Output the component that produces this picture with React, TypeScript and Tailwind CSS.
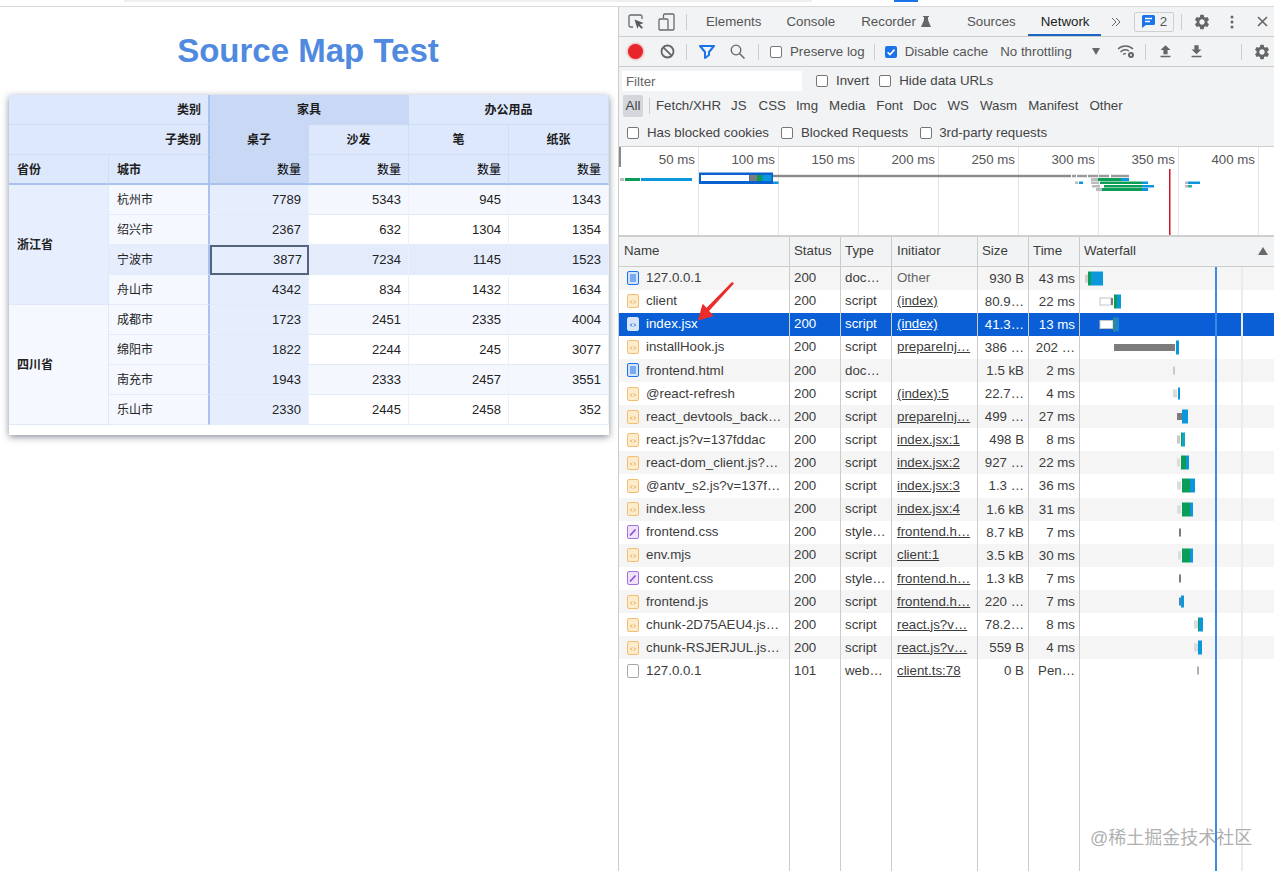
import { MdSettings, MdFileUpload, MdFileDownload } from 'react-icons/md';

type Seg = [number, number, string, number];

const GREEN = '#0a9d58';
const BLUE = '#0b97dc';
const LIGHT = '#dcdcdc';
const DARK = '#7c7c7c';

const requests: {
  name: string;
  kind: string;
  status: string;
  type: string;
  initiator: string;
  link: boolean;
  size: string;
  time: string;
  bars: Seg[];
}[] = [
  { name: '127.0.0.1', kind: 'doc', status: '200', type: 'doc…', initiator: 'Other', link: false, size: '930 B', time: '43 ms', bars: [[5, 3, '#d0d0d0', 8], [8, 3, GREEN, 14], [11, 12, BLUE, 14]] },
  { name: 'client', kind: 'js', status: '200', type: 'script', initiator: '(index)', link: true, size: '80.9…', time: '22 ms', bars: [[20, 11, '#ffffff', 7], [31, 2, DARK, 7], [34, 3, GREEN, 14], [37, 4, BLUE, 14]] },
  { name: 'index.jsx', kind: 'sel', status: '200', type: 'script', initiator: '(index)', link: true, size: '41.3…', time: '13 ms', bars: [[20, 13, '#ffffff', 8], [33, 3, '#2a8a9a', 14], [36, 3, '#1c83d0', 14]] },
  { name: 'installHook.js', kind: 'js', status: '200', type: 'script', initiator: 'prepareInj…', link: true, size: '386 …', time: '202 …', bars: [[34, 61, DARK, 7], [96, 3, BLUE, 14]] },
  { name: 'frontend.html', kind: 'doc', status: '200', type: 'doc…', initiator: '', link: false, size: '1.5 kB', time: '2 ms', bars: [[93, 2, '#c8c8c8', 8]] },
  { name: '@react-refresh', kind: 'js', status: '200', type: 'script', initiator: '(index):5', link: true, size: '22.7…', time: '4 ms', bars: [[93, 4, LIGHT, 8], [98, 2, BLUE, 12]] },
  { name: 'react_devtools_back…', kind: 'js', status: '200', type: 'script', initiator: 'prepareInj…', link: true, size: '499 …', time: '27 ms', bars: [[97, 5, DARK, 7], [102, 6, BLUE, 14]] },
  { name: 'react.js?v=137fddac', kind: 'js', status: '200', type: 'script', initiator: 'index.jsx:1', link: true, size: '498 B', time: '8 ms', bars: [[97, 3, '#c8c8c8', 8], [101, 1, GREEN, 14], [102, 3, '#10a5c5', 14]] },
  { name: 'react-dom_client.js?…', kind: 'js', status: '200', type: 'script', initiator: 'index.jsx:2', link: true, size: '927 …', time: '22 ms', bars: [[97, 3, LIGHT, 8], [101, 5, GREEN, 14], [106, 3, BLUE, 14]] },
  { name: '@antv_s2.js?v=137f…', kind: 'js', status: '200', type: 'script', initiator: 'index.jsx:3', link: true, size: '1.3 …', time: '36 ms', bars: [[97, 4, LIGHT, 8], [102, 8, GREEN, 14], [110, 5, BLUE, 14]] },
  { name: 'index.less', kind: 'js', status: '200', type: 'script', initiator: 'index.jsx:4', link: true, size: '1.6 kB', time: '31 ms', bars: [[97, 4, LIGHT, 8], [102, 8, GREEN, 14], [110, 3, BLUE, 14]] },
  { name: 'frontend.css', kind: 'css', status: '200', type: 'style…', initiator: 'frontend.h…', link: true, size: '8.7 kB', time: '7 ms', bars: [[99, 2, DARK, 8]] },
  { name: 'env.mjs', kind: 'js', status: '200', type: 'script', initiator: 'client:1', link: true, size: '3.5 kB', time: '30 ms', bars: [[98, 3, LIGHT, 8], [102, 8, GREEN, 14], [110, 3, BLUE, 14]] },
  { name: 'content.css', kind: 'css', status: '200', type: 'style…', initiator: 'frontend.h…', link: true, size: '1.3 kB', time: '7 ms', bars: [[99, 2, DARK, 8]] },
  { name: 'frontend.js', kind: 'js', status: '200', type: 'script', initiator: 'frontend.h…', link: true, size: '220 …', time: '7 ms', bars: [[99, 2, '#4a87b0', 8], [101, 3, BLUE, 12]] },
  { name: 'chunk-2D75AEU4.js…', kind: 'js', status: '200', type: 'script', initiator: 'react.js?v…', link: true, size: '78.2…', time: '8 ms', bars: [[114, 4, LIGHT, 8], [118, 1, GREEN, 14], [119, 4, BLUE, 14]] },
  { name: 'chunk-RSJERJUL.js…', kind: 'js', status: '200', type: 'script', initiator: 'react.js?v…', link: true, size: '559 B', time: '4 ms', bars: [[114, 4, LIGHT, 8], [118, 4, BLUE, 14]] },
  { name: '127.0.0.1', kind: 'ws', status: '101', type: 'web…', initiator: 'client.ts:78', link: true, size: '0 B', time: 'Pen…', bars: [[117, 2, '#b0b0b0', 8]] },
];

const tableRows = [
  { city: '杭州市', nums: ['7789', '5343', '945', '1343'], bg: 'bg-[#f4f7fe]', cityBg: 'bg-[#f5f8ff]' },
  { city: '绍兴市', nums: ['2367', '632', '1304', '1354'], bg: 'bg-white', cityBg: 'bg-[#f5f8ff]' },
  { city: '宁波市', nums: ['3877', '7234', '1145', '1523'], bg: 'bg-[#e4ecfc]', cityBg: 'bg-[#e6edfd]' },
  { city: '舟山市', nums: ['4342', '834', '1432', '1634'], bg: 'bg-white', cityBg: 'bg-[#f5f8ff]' },
  { city: '成都市', nums: ['1723', '2451', '2335', '4004'], bg: 'bg-[#f4f7fe]', cityBg: 'bg-[#f5f8ff]' },
  { city: '绵阳市', nums: ['1822', '2244', '245', '3077'], bg: 'bg-white', cityBg: 'bg-[#f5f8ff]' },
  { city: '南充市', nums: ['1943', '2333', '2457', '3551'], bg: 'bg-[#f4f7fe]', cityBg: 'bg-[#f5f8ff]' },
  { city: '乐山市', nums: ['2330', '2445', '2458', '352'], bg: 'bg-white', cityBg: 'bg-[#f5f8ff]' },
];

const HEAD = 'bg-[#dde8fc] border-r border-b border-[#d0ddf6] flex items-center pt-[1px] font-bold text-[12px] text-[#1d1d1d]';
const HOT = 'bg-[#c9d8f5] border-r border-b border-[#c9d8f5] flex items-center pt-[1px] font-bold text-[12px] text-[#1d1d1d]';

function PivotTable() {
  return (
    <div className="mt-[26px] ml-[9px] w-[600px] h-[340px] bg-white rounded-t-[2px] shadow-[0_2px_7px_rgba(40,50,70,0.55)] self-start">
      <div className="grid grid-cols-[100px_101px_99px_100px_100px_100px] grid-rows-[repeat(11,30px)] text-[#222]">
        <div className={`${HEAD} col-span-2 justify-end pr-[7px] border-r-2 border-r-[#a9c3ee]`}>类别</div>
        <div className={`${HOT} col-span-2 justify-center`}>家具</div>
        <div className={`${HEAD} col-span-2 justify-center`}>办公用品</div>

        <div className={`${HEAD} col-span-2 justify-end pr-[7px] border-r-2 border-r-[#a9c3ee]`}>子类别</div>
        <div className={`${HOT} justify-center`}>桌子</div>
        <div className={`${HEAD} justify-center`}>沙发</div>
        <div className={`${HEAD} justify-center`}>笔</div>
        <div className={`${HEAD} justify-center`}>纸张</div>

        <div className={`${HEAD} pl-2 border-b-2 border-b-[#a9c3ee]`}>省份</div>
        <div className={`${HEAD} pl-2 border-b-2 border-b-[#a9c3ee] border-r-2 border-r-[#a9c3ee]`}>城市</div>
        <div className={`${HOT} justify-end pr-[7px] !font-normal text-black border-b-2 border-b-[#a9c3ee]`}>数量</div>
        <div className={`${HEAD} justify-end pr-[7px] !font-normal text-black border-b-2 border-b-[#a9c3ee]`}>数量</div>
        <div className={`${HEAD} justify-end pr-[7px] !font-normal text-black border-b-2 border-b-[#a9c3ee]`}>数量</div>
        <div className={`${HEAD} justify-end pr-[7px] !font-normal text-black border-b-2 border-b-[#a9c3ee]`}>数量</div>

        {tableRows.map((r, i) => (
          <TableRow key={r.city} row={r} index={i} />
        ))}
      </div>
    </div>
  );
}

function TableRow({ row, index }: { row: (typeof tableRows)[number]; index: number }) {
  const line = 'border-b border-[#e3eafa]';
  return (
    <>
      {index % 4 === 0 && (
        <div
          className={`row-span-4 flex items-center pl-2 font-bold text-[12px] border-r border-b border-[#dfe7f9] ${
            index === 0 ? 'bg-[#e7eefe]' : 'bg-[#f5f8ff]'
          }`}
        >
          {index === 0 ? '浙江省' : '四川省'}
        </div>
      )}
      <div className={`${row.cityBg} ${line} border-r-2 border-r-[#a9c3ee] flex items-center pl-2 text-[12px]`}>{row.city}</div>
      {row.nums.map((n, j) => {
        const selected = index === 2 && j === 0;
        const bg = j === 0 ? 'bg-[#e6eefe]' : row.bg;
        return (
          <div
            key={j}
            className={`${bg} flex items-center justify-end text-[13px] ${
              selected ? 'border-2 border-[#55637c] pr-[5px]' : `${line} border-r border-r-[#edf1fb] pr-[7px]`
            }`}
          >
            {n}
          </div>
        );
      })}
    </>
  );
}

function Box({ checked = false }: { checked?: boolean }) {
  return checked ? (
    <svg width="12" height="12" viewBox="0 0 12 12" className="block shrink-0">
      <rect width="12" height="12" rx="2" fill="#1a73e8" />
      <path d="M2.6 6.2 5 8.6 9.5 3.6" fill="none" stroke="#fff" strokeWidth="1.6" />
    </svg>
  ) : (
    <span className="block w-3 h-3 shrink-0 rounded-[2px] border border-[#767676] bg-white" />
  );
}

function Sep({ className }: { className: string }) {
  return <span className={`block w-px h-4 bg-[#cdcdcd] shrink-0 ${className}`} />;
}

function FileIcon({ kind }: { kind: string }) {
  if (kind === 'doc') {
    return (
      <svg width="12" height="14" viewBox="0 0 12 14" className="shrink-0">
        <rect x="0.5" y="0.5" width="11" height="13" rx="1.5" fill="#d6e5fb" stroke="#1a73e8" />
        <path d="M3 4h6M3 6h6M3 8h6M3 10h6" stroke="#1a73e8" />
      </svg>
    );
  }
  if (kind === 'css') {
    return (
      <svg width="12" height="14" viewBox="0 0 12 14" className="shrink-0">
        <rect x="0.5" y="0.5" width="11" height="13" rx="1.5" fill="#efe3fb" stroke="#a56fdf" />
        <path d="M3 10.5 8.5 4.5" stroke="#8e44d8" strokeWidth="1.6" />
      </svg>
    );
  }
  if (kind === 'ws') {
    return (
      <svg width="12" height="14" viewBox="0 0 12 14" className="shrink-0">
        <rect x="0.5" y="0.5" width="11" height="13" rx="1.5" fill="#fff" stroke="#a8a8a8" />
      </svg>
    );
  }
  const sel = kind === 'sel';
  const stroke = sel ? '#0a5fd6' : '#e8a33d';
  return (
    <svg width="12" height="14" viewBox="0 0 12 14" className="shrink-0">
      <rect x="0.5" y="0.5" width="11" height="13" rx="1.5" fill={sel ? '#d6e5fb' : '#fdeccb'} stroke={sel ? '#d6e5fb' : '#f3bd72'} />
      <path d="M5 6.5 3.5 8 5 9.5M7 6.5 8.5 8 7 9.5" fill="none" stroke={stroke} />
    </svg>
  );
}

function WaterfallBars({ bars }: { bars: Seg[] }) {
  return (
    <svg width="194" height="23" className="block">
      {bars.map((b, i) => (
        <rect
          key={i}
          x={b[0]}
          y={(23 - b[3]) / 2}
          width={b[1]}
          height={b[3]}
          fill={b[2]}
          stroke={b[2] === '#ffffff' ? '#c4c4c4' : 'none'}
        />
      ))}
    </svg>
  );
}

function NetworkTable() {
  const cols = ['w-[171px] pl-[5px]', 'w-[51px] pl-[4px]', 'w-[51px] pl-[4px]', 'w-[86px] pl-[5px]', 'w-[51px] pr-[4px] text-right', 'w-[51px] pr-[4px] text-right'];
  return (
    <div className="flex-1 flex flex-col relative min-h-0 text-[13.3px] text-[#3c3c3c]">
      <div className="flex h-[29.5px] shrink-0 items-center bg-[#f1f3f4] border-b border-[#cccccc]">
        {['Name', 'Status', 'Type', 'Initiator'].map((h, i) => (
          <div key={h} className={`${cols[i]} h-full flex items-center border-r border-[#cccccc]`}>{h}</div>
        ))}
        <div className="w-[51px] pl-[4px] h-full flex items-center border-r border-[#cccccc]">Size</div>
        <div className="w-[51px] pl-[4px] h-full flex items-center border-r border-[#cccccc]">Time</div>
        <div className="flex-1 pl-[4px] pr-[6px] h-full flex items-center justify-between">
          Waterfall
          <svg width="10" height="8" viewBox="0 0 10 8">
            <path d="M5 0 10 8H0z" fill="#6a6a6a" />
          </svg>
        </div>
      </div>
      {requests.map((r, i) => {
        const selected = r.kind === 'sel';
        const rowBg = selected ? 'bg-[#0a5fd6] text-white' : i % 2 === 0 ? 'bg-[#f5f5f5]' : 'bg-white';
        return (
          <div key={i} className={`flex h-[23.12px] shrink-0 items-center whitespace-nowrap ${rowBg}`}>
            <div className={`${cols[0]} h-full flex items-center gap-[7px] pl-[8px] border-r border-[#cccccc]`}>
              <FileIcon kind={r.kind} />
              <span>{r.name}</span>
            </div>
            <div className={`${cols[1]} h-full flex items-center border-r border-[#cccccc]`}>{r.status}</div>
            <div className={`${cols[2]} h-full flex items-center border-r border-[#cccccc]`}>{r.type}</div>
            <div className={`${cols[3]} h-full flex items-center border-r border-[#cccccc] overflow-hidden`}>
              <span className={r.link ? 'underline' : selected ? '' : 'text-[#666]'}>{r.initiator}</span>
            </div>
            <div className={`${cols[4]} h-full leading-[23px] border-r border-[#cccccc]`}>{r.size}</div>
            <div className={`${cols[5]} h-full leading-[23px] border-r border-[#cccccc]`}>{r.time}</div>
            <div className="flex-1 h-full">
              <WaterfallBars bars={r.bars} />
            </div>
          </div>
        );
      })}
      <div className="flex flex-1">
        {cols.map((c, i) => (
          <div key={i} className={`${c} border-r border-[#cccccc]`} />
        ))}
      </div>
      {/* DOMContentLoaded / load markers over the rows */}
      <span className="absolute top-[30px] bottom-0 left-[596px] w-[2px] bg-[#3b8ae6]" />
      <span className="absolute top-[30px] bottom-0 left-[622px] w-[2px] bg-[#ececec]" />
    </div>
  );
}

function Overview() {
  const ticks = ['50 ms', '100 ms', '150 ms', '200 ms', '250 ms', '300 ms', '350 ms', '400 ms'];
  return (
    <div className="relative h-[90px] shrink-0 flex bg-white border-b-2 border-[#cfcfcf]">
      {ticks.map((t) => (
        <div key={t} className="w-[80px] shrink-0 border-r border-[#e4e4e4] text-right pr-[3px] pt-[3px] text-[13.3px] text-[#555]">
          {t}
        </div>
      ))}
      <svg width="655" height="88" viewBox="618 147 655 88" className="absolute left-0 top-0">
        <rect x="618" y="147" width="2" height="20" fill="#8a8a8a" />
        <rect x="619" y="178" width="4" height="3" fill="#bbb" />
        <rect x="624" y="178" width="15" height="3" fill={GREEN} />
        <rect x="640" y="178" width="51" height="3" fill={BLUE} />
        <rect x="698" y="172.500" width="74" height="11.500" fill="#0a62d0" />
        <rect x="772" y="181.500" width="5.500" height="2.500" fill="#0b97dc" />
        <rect x="700" y="175" width="48" height="6" fill="#fff" />
        <rect x="748.500" y="175" width="7.500" height="6" fill={DARK} />
        <rect x="756" y="175" width="5.500" height="6" fill={GREEN} />
        <rect x="761.500" y="175" width="9" height="6" fill={BLUE} />
        <rect x="772" y="174.800" width="298" height="2.400" fill="#8a8a8a" />
        <path d="M1071 176h4M1076 176h10M1087 176h10M1098 176h10M1110 176h18" stroke="#9a9a9a" strokeWidth="2.400" />
        <rect x="1090" y="178" width="7" height="3" fill="#bbb" />
        <rect x="1097" y="178" width="23" height="3" fill={GREEN} />
        <rect x="1120" y="178" width="8" height="3" fill={BLUE} />
        <rect x="1074" y="181.500" width="3" height="2.500" fill="#bbb" />
        <rect x="1078" y="181.500" width="4" height="2.500" fill={BLUE} />
        <rect x="1090" y="181.500" width="8" height="2.500" fill="#bbb" />
        <rect x="1099" y="181.500" width="42" height="2.500" fill={GREEN} />
        <rect x="1141" y="181.500" width="6" height="2.500" fill={BLUE} />
        <rect x="1091" y="185" width="8" height="2.500" fill="#bbb" />
        <rect x="1103" y="185" width="38" height="2.500" fill={GREEN} />
        <rect x="1141" y="185" width="12" height="2.500" fill={BLUE} />
        <rect x="1095" y="188" width="6" height="3" fill="#bbb" />
        <rect x="1101" y="188" width="40" height="3" fill={GREEN} />
        <rect x="1141" y="188" width="6" height="3" fill={BLUE} />
        <rect x="1184" y="181.500" width="3" height="2.500" fill="#bbb" />
        <rect x="1187" y="181.500" width="12" height="2.500" fill={BLUE} />
        <rect x="1184" y="185" width="3" height="2.500" fill="#bbb" />
        <rect x="1187" y="185" width="4" height="2.500" fill="#2bb3a0" />
        <rect x="1168" y="169" width="1.500" height="66" fill="#d0142c" />
      </svg>
    </div>
  );
}

function TopToolbar() {
  return (
    <div className="h-[30px] shrink-0 flex items-center bg-[#f1f3f4] border-b border-[#cccccc] text-[13.3px] text-[#555]">
      <svg width="17" height="16" viewBox="0 0 17 16" className="ml-[9px] shrink-0">
        <path d="M5 13H2.5A1.5 1.5 0 0 1 1 11.5v-9A1.5 1.5 0 0 1 2.5 1h10A1.5 1.5 0 0 1 14 2.5V5" fill="none" stroke="#6a6a6a" strokeWidth="1.3" />
        <path d="M6.5 5.5 15.5 9l-3.6 1.4 3 3-1.4 1.4-3-3L9.5 15z" fill="#5a5a5a" />
      </svg>
      <svg width="17" height="18" viewBox="0 0 17 18" className="ml-[13px] shrink-0">
        <path d="M5.5 5V2.2A1.2 1.2 0 0 1 6.7 1h8.1A1.2 1.2 0 0 1 16 2.2v13.6a1.2 1.2 0 0 1-1.2 1.2H10" fill="none" stroke="#6a6a6a" strokeWidth="1.3" />
        <rect x="1" y="6" width="9" height="11" rx="1" fill="none" stroke="#6a6a6a" strokeWidth="1.3" />
      </svg>
      <Sep className="ml-[11px]" />
      <span className="ml-[19px]">Elements</span>
      <span className="ml-[25px]">Console</span>
      <span className="ml-[26px]">Recorder</span>
      <svg width="10" height="11" viewBox="0 0 10 11" className="ml-[5px] shrink-0">
        <path d="M2 0h6v1H7v3l3 7H0l3-7V1H2z" fill="#666" />
      </svg>
      <span className="ml-[36px]">Sources</span>
      <span className="relative ml-[25px] h-full flex items-center text-[#222] before:absolute before:-left-[13px] before:-right-[12px] before:bottom-0 before:h-[2px] before:bg-[#1a66c2]">
        Network
      </span>
      <svg width="10" height="10" viewBox="0 0 10 10" className="ml-[22px] shrink-0">
        <path d="M1 1l4 4-4 4M5 1l4 4-4 4" fill="none" stroke="#666" strokeWidth="1" />
      </svg>
      <span className="ml-[13px] w-[40px] h-[20px] flex items-center justify-center gap-[5px] rounded-[2px] border border-[#cfcfcf] text-[#555]">
        <svg width="13" height="13" viewBox="0 0 13 13" className="shrink-0">
          <path d="M1.5 0h10A1.5 1.5 0 0 1 13 1.5v7a1.5 1.5 0 0 1-1.5 1.5H4l-4 3V1.5A1.5 1.5 0 0 1 1.500 0z" fill="#1a73e8" />
          <path d="M3 3.500h7M3 6.500h5" stroke="#fff" strokeWidth="1.300" />
        </svg>
        2
      </span>
      <Sep className="ml-[7px]" />
      <MdSettings className="ml-[11px] shrink-0 text-[#666]" size={18} />
      <svg width="4" height="14" viewBox="0 0 4 14" className="ml-[19px] shrink-0">
        <circle cx="2" cy="2" r="1.500" fill="#666" />
        <circle cx="2" cy="7" r="1.500" fill="#666" />
        <circle cx="2" cy="12" r="1.500" fill="#666" />
      </svg>
      <svg width="11" height="11" viewBox="0 0 11 11" className="ml-[23px] shrink-0">
        <path d="M1 1l9 9M10 1l-9 9" stroke="#666" strokeWidth="1.600" />
      </svg>
    </div>
  );
}

function SecondToolbar() {
  return (
    <div className="h-[30px] shrink-0 flex items-center bg-[#f1f3f4] border-b border-[#cccccc] text-[13.3px] text-[#555]">
      <span className="ml-[9px] block w-[15px] h-[15px] rounded-full bg-[#e8252b] shadow-[0_0_2px_1px_rgba(232,37,43,0.35)]" />
      <svg width="15" height="15" viewBox="0 0 15 15" className="ml-[17px] shrink-0">
        <circle cx="7.500" cy="7.500" r="6" fill="none" stroke="#666" strokeWidth="1.800" />
        <path d="M3.300 3.300l8.400 8.400" stroke="#666" strokeWidth="1.800" />
      </svg>
      <Sep className="ml-[11px]" />
      <svg width="16" height="14" viewBox="0 0 16 14" className="ml-[12px] shrink-0">
        <path d="M1 1h14L10 7v3l-4 3V7z" fill="none" stroke="#1a73e8" strokeWidth="2" strokeLinejoin="round" />
      </svg>
      <svg width="15" height="15" viewBox="0 0 15 15" className="ml-[15px] shrink-0">
        <circle cx="6" cy="6" r="4.800" fill="none" stroke="#666" strokeWidth="1.300" />
        <path d="M9.500 9.500l5 5" stroke="#666" strokeWidth="1.500" />
      </svg>
      <Sep className="ml-[13px]" />
      <span className="ml-[11px]"><Box /></span>
      <span className="ml-[8px]">Preserve log</span>
      <Sep className="ml-[9px]" />
      <span className="ml-[10px]"><Box checked /></span>
      <span className="ml-[8px]">Disable cache</span>
      <span className="ml-[12px]">No throttling</span>
      <svg width="8" height="7" viewBox="0 0 8 7" className="ml-[20px] shrink-0">
        <path d="M0 0h8L4 7z" fill="#666" />
      </svg>
      <svg width="18" height="15" viewBox="0 0 18 15" className="ml-[17px] shrink-0">
        <path d="M1 5a11 11 0 0 1 15 0M3.500 8a7 7 0 0 1 8.500-1M6 10.500a3.500 3.500 0 0 1 3-.8" fill="none" stroke="#666" strokeWidth="1.400" />
        <circle cx="14" cy="11" r="3" fill="#666" />
        <circle cx="14" cy="11" r="1" fill="#f1f3f4" />
      </svg>
      <Sep className="ml-[10px]" />
      <MdFileUpload className="ml-[11px] shrink-0 text-[#666]" size={17} />
      <MdFileDownload className="ml-[14px] shrink-0 text-[#666]" size={17} />
      <Sep className="ml-[36px]" />
      <MdSettings className="ml-[11px] shrink-0 text-[#666]" size={18} />
    </div>
  );
}

function FilterPanel() {
  return (
    <div className="h-[80px] shrink-0 flex flex-col bg-[#f1f3f4] border-b border-[#cccccc] text-[13.3px] text-[#444]">
      <div className="h-[27px] flex items-center">
        <div className="ml-[3px] w-[180px] h-[20px] bg-white text-[#666] pl-[4px] leading-[21px]">Filter</div>
        <span className="ml-[14px]"><Box /></span>
        <span className="ml-[8px]">Invert</span>
        <span className="ml-[10px]"><Box /></span>
        <span className="ml-[8px]">Hide data URLs</span>
      </div>
      <div className="h-[24px] flex items-center">
        <span className="ml-[4px] w-[20px] h-[22px] rounded-[2px] bg-[#d3d6da] flex items-center justify-center">All</span>
        <Sep className="ml-[6px]" />
        <span className="ml-[6px]">Fetch/XHR</span>
        <span className="ml-[10px]">JS</span>
        <span className="ml-[12px]">CSS</span>
        <span className="ml-[10px]">Img</span>
        <span className="ml-[11px]">Media</span>
        <span className="ml-[11px]">Font</span>
        <span className="ml-[10px]">Doc</span>
        <span className="ml-[11px]">WS</span>
        <span className="ml-[11px]">Wasm</span>
        <span className="ml-[11px]">Manifest</span>
        <span className="ml-[11px]">Other</span>
      </div>
      <div className="flex-1 flex items-center pt-[1px]">
        <span className="ml-[8px]"><Box /></span>
        <span className="ml-[8px]">Has blocked cookies</span>
        <span className="ml-[12px]"><Box /></span>
        <span className="ml-[8px]">Blocked Requests</span>
        <span className="ml-[12px]"><Box /></span>
        <span className="ml-[7px]">3rd-party requests</span>
      </div>
    </div>
  );
}

export default function App() {
  return (
    <div className="relative w-[1274px] h-[871px] overflow-hidden bg-white flex flex-col font-['Liberation_Sans','Noto_Sans_CJK_SC',sans-serif]">
      {/* browser chrome sliver */}
      <div className="h-[7px] shrink-0 border-b border-[#d9d9d9] flex items-start">
        <div className="ml-[124px] w-[688px] h-[2px] bg-[#efefef]" />
        <div className="ml-[82px] w-[24px] h-[2px] bg-[#1a73e8]" />
      </div>
      <div className="flex-1 flex min-h-0">
        <div className="w-[618px] shrink-0 flex flex-col">
          <h1 className="mt-[26px] pr-[2px] text-center text-[33px] leading-[36px] font-bold text-[#4f8ae0]">Source Map Test</h1>
          <PivotTable />
        </div>
        <div className="flex-1 min-w-0 flex flex-col border-l border-[#cccccc]">
          <TopToolbar />
          <SecondToolbar />
          <FilterPanel />
          <Overview />
          <NetworkTable />
        </div>
      </div>
      {/* red annotation arrow drawn on top of the screenshot */}
      <svg width="50" height="50" viewBox="0 0 50 50" className="absolute left-[690px] top-[278px]">
        <path d="M43 5.500 18 33 22.500 37.500 9 41.500 13 27 16.500 31 42 5z" fill="#ec2b2b" stroke="#ec2b2b" strokeWidth="1.500" strokeLinejoin="round" />
      </svg>
      <span className="absolute left-[1090px] top-[826px] text-[18px] leading-[24px] text-[#9a9a9a]/80">@稀土掘金技术社区</span>
    </div>
  );
}
